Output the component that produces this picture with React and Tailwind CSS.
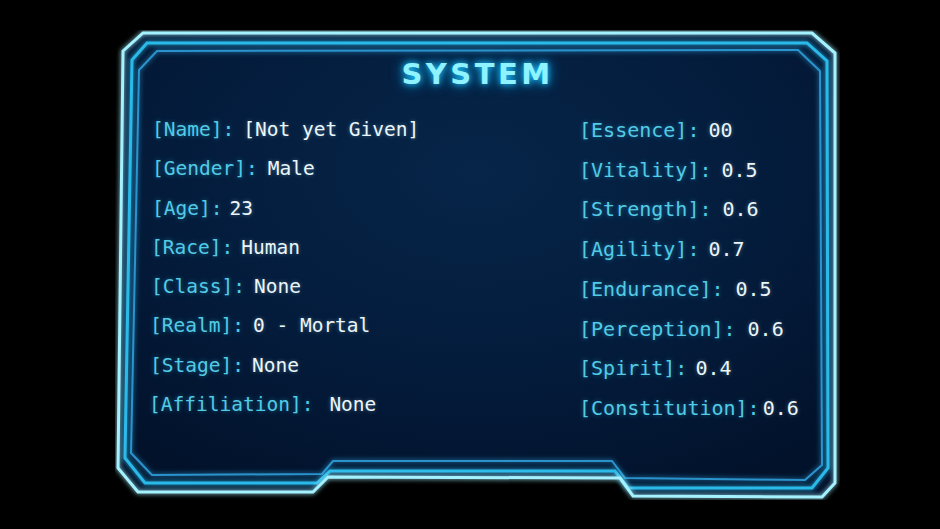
import React from "react";

const OUTER = "123,51 143,33 812,33 835,53 835,483 822,497 633,496 620,478 328,477 313,492 138,492 118,468";
const MIDDLE = "132,60 147,43 807,43 827,61 828,468 812,488 628,488 615,471 330,471 317,483 145,483 125,458";
const INNER = "139,70 157,51 798,50 820,71 822,465 805,480 625,478 612,461 333,461 322,474 152,475 131,453";

const profile = [
  { k: "Name", v: "[Not yet Given]", pl: "pl-[3px]", ml: "ml-[9px]" },
  { k: "Gender", v: "Male", pl: "pl-[3px]", ml: "ml-[10px]" },
  { k: "Age", v: "23", pl: "pl-[3px]", ml: "ml-[7px]" },
  { k: "Race", v: "Human", pl: "pl-[2px]", ml: "ml-[8px]" },
  { k: "Class", v: "None", pl: "pl-[2px]", ml: "ml-[9px]" },
  { k: "Realm", v: "0 - Mortal", pl: "pl-[1px]", ml: "ml-[9px]" },
  { k: "Stage", v: "None", pl: "pl-[1px]", ml: "ml-[8px]" },
  { k: "Affiliation", v: "None", pl: "pl-0", ml: "ml-[16px]" },
];

const stats = [
  { k: "Essence", v: "00", ml: "ml-[9px]" },
  { k: "Vitality", v: "0.5", ml: "ml-[10px]" },
  { k: "Strength", v: "0.6", ml: "ml-[11px]" },
  { k: "Agility", v: "0.7", ml: "ml-[9px]" },
  { k: "Endurance", v: "0.5", ml: "ml-[12px]" },
  { k: "Perception", v: "0.6", ml: "ml-[12px]" },
  { k: "Spirit", v: "0.4", ml: "ml-[8px]" },
  { k: "Constitution", v: "0.6", ml: "ml-[3px]" },
];

function Row({ k, v, ml, pl = "" }) {
  return (
    <div className={`flex items-center whitespace-pre ${pl}`}>
      <span className="text-[#52cbe6] [text-shadow:0_0_5px_rgba(60,200,240,0.45)]">
        [{k}]:
      </span>
      <span className={`${ml} text-[#eaf6fa] [text-shadow:0_0_4px_rgba(200,240,255,0.35)]`}>
        {v}
      </span>
    </div>
  );
}

function Frame() {
  return (
    <svg
      className="absolute inset-0 h-full w-full"
      viewBox="115 30 725 470"
      xmlns="http://www.w3.org/2000/svg"
    >
      <defs>
        <radialGradient id="panelFill" cx="0.5" cy="0.3" r="0.75">
          <stop offset="0" stopColor="#062548" />
          <stop offset="0.55" stopColor="#041c3c" />
          <stop offset="1" stopColor="#02122b" />
        </radialGradient>
        <filter id="lineGlow" x="-10%" y="-10%" width="120%" height="120%">
          <feGaussianBlur stdDeviation="2.5" result="b" />
          <feMerge>
            <feMergeNode in="b" />
            <feMergeNode in="SourceGraphic" />
          </feMerge>
        </filter>
      </defs>
      <polygon points={OUTER} fill="url(#panelFill)" />
      <polygon points={INNER} fill="none" stroke="#2a93cc" strokeWidth="2" filter="url(#lineGlow)" />
      <polygon points={MIDDLE} fill="none" stroke="#2cbaea" strokeWidth="3" filter="url(#lineGlow)" />
      <polygon points={OUTER} fill="none" stroke="#a4f2ff" strokeWidth="3" filter="url(#lineGlow)" />
    </svg>
  );
}

export default function App() {
  return (
    <div className="h-[529px] w-[940px] overflow-hidden bg-black pt-[30px] pl-[115px]">
      <div className="relative h-[470px] w-[725px]">
        <Frame />
        <div className="relative pt-[26px]">
          <h1 className="text-center font-['DejaVu_Sans',sans-serif] text-[29px] font-bold leading-[36px] tracking-[3.5px] text-[#8ff2ff] [text-shadow:0_0_6px_#1fc4ff,0_0_14px_#0aa8f0]">
            SYSTEM
          </h1>
          <div className="mt-[18px] grid grid-cols-[430px_1fr] pl-[34px] font-['DejaVu_Sans_Mono',monospace]">
            <div className="flex flex-col text-[19.5px] leading-[39.3px]">
              {profile.map((r) => (
                <Row key={r.k} {...r} />
              ))}
            </div>
            <div className="mt-[1px] flex flex-col text-[20px] leading-[39.7px]">
              {stats.map((r) => (
                <Row key={r.k} {...r} />
              ))}
            </div>
          </div>
        </div>
      </div>
    </div>
  );
}
